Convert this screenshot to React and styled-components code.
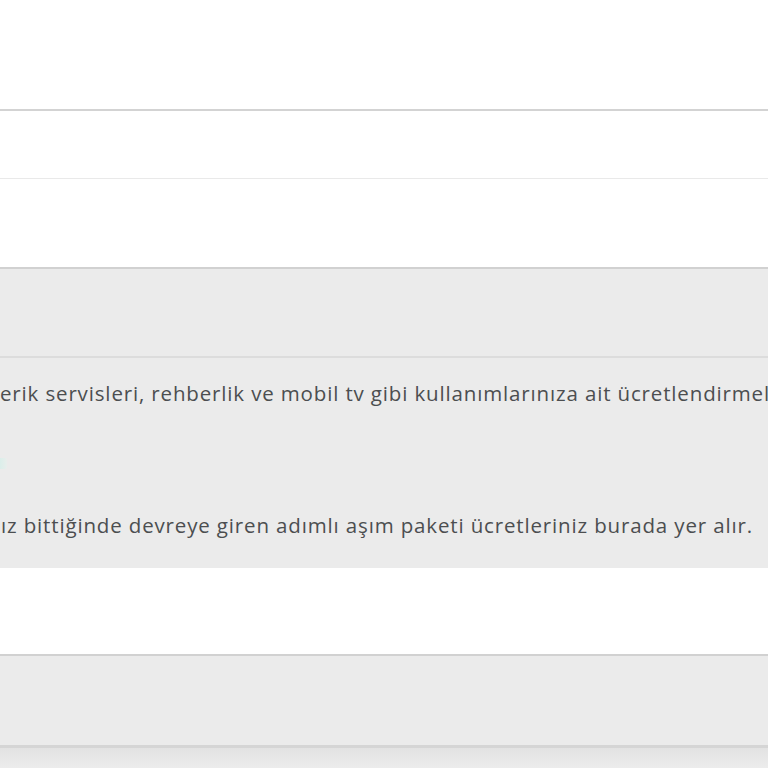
import React from 'react'
import styled, { createGlobalStyle } from 'styled-components'

const GlobalStyle = createGlobalStyle`
    html, body {
        margin: 0;
        padding: 0;
        background: #ffffff;
        overflow: hidden;
    }
    body {
        font-family: "Open Sans", "Noto Sans", "Liberation Sans", sans-serif;
        color: #4c4e50;
    }
`

const Page = styled.div`
    width: 768px;
    height: 768px;
    overflow: hidden;
    display: flex;
    flex-direction: column;
`

const TopArea = styled.div`
    height: 109px;
    flex: none;
    background: #ffffff;
`

const Row = styled.div`
    flex: none;
    height: ${p => p.h}px;
    background: #ffffff;
    border-top: ${p => (p.topLine ? '2px solid #d3d3d3' : 'none')};
    border-bottom: ${p => (p.bottomLine ? '1px solid #e9e9e9' : 'none')};
`

const AccordionHeader = styled.div`
    flex: none;
    height: ${p => p.h}px;
    background: #ebebeb;
    border-top: 2px solid #d1d1d1;
    border-bottom: ${p => (p.heavy ? '3px solid #d5d5d5' : '2px solid #dcdcdc')};
`

const AccordionBody = styled.div`
    flex: none;
    height: 210px;
    background: #ebebeb;
    padding-top: 21px;
    box-sizing: border-box;
    overflow: hidden;
    display: flex;
    flex-direction: column;
`

const Text = styled.p`
    margin: 0;
    font-size: 20.5px;
    line-height: 28px;
    letter-spacing: 0.85px;
    white-space: nowrap;
    padding-left: ${p => p.indent || 0}px;
`

const Marker = styled.span`
    display: block;
    width: 7px;
    height: 11px;
    margin: 51px 0 42px;
    background: linear-gradient(90deg, #dbeeea, #e8eeec);
    border-radius: 0 2px 2px 0;
`

const NextArea = styled.div`
    flex: 1;
    background: linear-gradient(#e2e2e2, #ececec);
`

export default function App() {
    return (
        <Page>
            <GlobalStyle />
            <TopArea />
            <Row h={67} topLine bottomLine />
            <Row h={88} />
            <AccordionHeader h={87} />
            <AccordionBody>
                <Text indent={0}>
                    erik servisleri, rehberlik ve mobil tv gibi kullanımlarınıza ait ücretlendirmeleriniz burada yer alır.
                </Text>
                <Marker />
                <Text indent={1}>
                    ız bittiğinde devreye giren adımlı aşım paketi ücretleriniz burada yer alır.
                </Text>
            </AccordionBody>
            <Row h={86} />
            <AccordionHeader h={89} heavy />
            <NextArea />
        </Page>
    )
}
